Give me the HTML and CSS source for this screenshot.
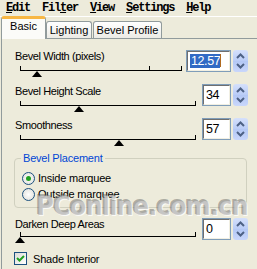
FILE: index.html
```html
<!DOCTYPE html>
<html>
<head>
    <meta name="viewport" content="width=device-width, initial-scale=1.0">
    <title>Bevel Boss</title>
    <link rel="stylesheet" href="styles.css">
</head>
<body>
    <div class="menubar">
        <span><u>E</u>dit</span>
        <span>Fil<u>t</u>er</span>
        <span><u>V</u>iew</span>
        <span><u>S</u>ettings</span>
        <span><u>H</u>elp</span>
    </div>

    <div class="tabs">
        <div class="tab on">Basic</div>
        <div class="tab">Lighting</div>
        <div class="tab">Bevel Profile</div>
    </div>

    <div class="panel">
        <div class="row first">
            <div class="slide">
                <div class="lbl">Bevel Width (pixels)</div>
                <div class="track"><i class="tick" style="left: 80%"></i><b class="thumb" style="left: 10.6%"></b></div>
            </div>
            <div class="num wide"><span class="val"><span class="sel">12.57</span><span class="caret"></span></span></div>
            <div class="spin"><svg width="15" height="22" viewBox="0 0 15 22"><path d="M4 8 L7.5 4.5 L11 8" /><path d="M4 14 L7.5 17.5 L11 14" /></svg></div>
        </div>

        <div class="row">
            <div class="slide">
                <div class="lbl">Bevel Height Scale</div>
                <div class="track"><b class="thumb" style="left: 34%"></b></div>
            </div>
            <div class="num"><span class="val">34</span></div>
            <div class="spin"><svg width="15" height="22" viewBox="0 0 15 22"><path d="M4 8 L7.5 4.5 L11 8" /><path d="M4 14 L7.5 17.5 L11 14" /></svg></div>
        </div>

        <div class="row">
            <div class="slide">
                <div class="lbl">Smoothness</div>
                <div class="track"><b class="thumb" style="left: 57%"></b></div>
            </div>
            <div class="num"><span class="val">57</span></div>
            <div class="spin"><svg width="15" height="22" viewBox="0 0 15 22"><path d="M4 8 L7.5 4.5 L11 8" /><path d="M4 14 L7.5 17.5 L11 14" /></svg></div>
        </div>

        <fieldset class="group">
            <legend>Bevel Placement</legend>
            <label class="radio on"><i></i>Inside marquee</label>
            <label class="radio"><i></i>Outside marquee</label>
        </fieldset>

        <div class="row last">
            <div class="slide">
                <div class="lbl">Darken Deep Areas</div>
                <div class="track"><b class="thumb" style="left: 0%"></b></div>
            </div>
            <div class="num"><span class="val">0</span></div>
            <div class="spin"><svg width="15" height="22" viewBox="0 0 15 22"><path d="M4 8 L7.5 4.5 L11 8" /><path d="M4 14 L7.5 17.5 L11 14" /></svg></div>
        </div>

        <label class="check"><i><svg width="11" height="11" viewBox="0 0 11 11"><path d="M2 5 L4.5 7.5 L9 3" /></svg></i>Shade Interior</label>
    </div>

    <!-- site watermark burnt into the capture -->
    <div class="mark">PConline.com.cn</div>
</body>
</html>
```

FILE: styles.css
```css
body {
    margin: 0;
    width: 257px;
    height: 269px;
    overflow: hidden;
    position: relative;
    background-color: #edebdb;
    font-family: "Liberation Sans", Arial, sans-serif;
    font-size: 11px;
    color: #000000;
}

/* menu */
.menubar {
    height: 16px;
    border-bottom: 1px solid #ffffff;
    display: flex;
    gap: 12px;
    padding-left: 6px;
    font-family: "Liberation Mono", monospace;
    font-weight: bold;
    font-size: 12px;
    letter-spacing: -1.2px;
    line-height: 16px;
}

/* tabs */
.tabs {
    height: 21px;
    display: flex;
    align-items: flex-end;
    padding-left: 1px;
    position: relative;
    z-index: 1;
}
.tab {
    height: 16px;
    border: 1px solid #919b9c;
    border-bottom: none;
    border-radius: 3px 3px 0 0;
    background: linear-gradient(#ffffff, #ecebe5);
    line-height: 17px;
    text-align: center;
    margin-right: 1px;
}
.tab:nth-child(2) { width: 44px; }
.tab:nth-child(3) { width: 67px; }
.tab.on {
    width: 43px;
    height: 19px;
    margin-bottom: -1px;
    margin-right: 0;
    border-top: 3px solid #f7b745;
    background: #fbfbf8;
    line-height: 14px;
    padding-bottom: 1px;
}

.panel {
    margin-left: 1px;
    border-top: 1px solid #919b9c;
    border-left: 1px solid #919b9c;
    padding: 11px 9px 0 0;
    height: 219px;
}

/* slider rows */
.row {
    display: flex;
    align-items: flex-start;
    height: 34px;
}
.slide {
    flex: 1;
    padding-left: 13px;
}
.lbl {
    height: 13px;
    line-height: 13px;
    letter-spacing: -0.4px;
    margin-top: 1px;
}
.first .lbl { margin-top: 0; }
.track {
    position: relative;
    margin: 3px 6px 0 5px;
    height: 4px;
    border-left: 1px solid #000000;
    border-right: 1px solid #000000;
    border-bottom: 1px solid #000000;
}
.first .track { margin-right: 4px; }
.tick {
    position: absolute;
    top: 0;
    width: 1px;
    height: 4px;
    background: #000000;
}
.thumb {
    position: absolute;
    top: 5px;
    margin-left: -6px;
    width: 0;
    height: 0;
    border-left: 5px solid transparent;
    border-right: 5px solid transparent;
    border-bottom: 6px solid #000000;
}

.num {
    width: 27px;
    height: 20px;
    border: 1px solid #7f9db9;
    background: #ffffff;
    padding: 0;
    box-sizing: content-box;
}
.num.wide { width: 43px; }
.val {
    display: block;
    height: 18px;
    border-top: 1px solid #6f6f6f;
    border-left: 1px solid #6f6f6f;
    border-right: 1px solid #f1efe2;
    border-bottom: 1px solid #f1efe2;
    font-size: 12.5px;
    line-height: 18px;
    padding-left: 2px;
    letter-spacing: -0.4px;
}
.sel {
    background: #316ac5;
    color: #ffffff;
    padding: 0 0 0 1px;
}
.caret {
    display: inline-block;
    width: 1px;
    height: 13px;
    vertical-align: -2px;
    background: #b06a20;
}
.spin {
    margin-left: 2px;
    width: 15px;
    height: 22px;
    border-radius: 3px;
    background: linear-gradient(#d5e0fb, #b9ccf7 50%, #b3c7f5 50%, #c9d7fb);
}
.spin svg {
    display: block;
    fill: none;
    stroke: #4d6185;
    stroke-width: 2;
}

/* group box */
.group {
    margin: 0 1px 0 12px;
    padding: 0 6px 5px 6px;
    border: 1px solid #d0d0bf;
    border-radius: 4px;
}
.group legend {
    padding: 0 2px;
    color: #0046d5;
    line-height: 13px;
    letter-spacing: -0.2px;
}
.radio {
    display: flex;
    align-items: center;
    height: 16px;
    gap: 3px;
    margin-left: 1px;
    letter-spacing: -0.2px;
}
.radio.on { margin-top: 5px; }
.radio i {
    width: 11px;
    height: 11px;
    border: 1px solid #1c5180;
    border-radius: 50%;
    background: radial-gradient(#ffffff, #dcdcd6);
    position: relative;
}
.radio.on i::after {
    content: "";
    position: absolute;
    left: 3px;
    top: 3px;
    width: 5px;
    height: 5px;
    border-radius: 50%;
    background: #21a121;
}
.last {
    margin-top: 10px;
}
.last .lbl { margin-top: 0; }
.last .track { margin-top: 1px; }

/* checkbox */
.check {
    display: flex;
    align-items: center;
    height: 13px;
    gap: 6px;
    margin: 0 0 0 12px;
    letter-spacing: -0.2px;
}
.check i {
    width: 11px;
    height: 11px;
    border: 1px solid #1c5180;
    background: linear-gradient(135deg, #dcdcd7, #ffffff);
}
.check svg {
    display: block;
    fill: none;
    stroke: #21a121;
    stroke-width: 2;
}

/* watermark */
.mark {
    position: absolute;
    left: 36px;
    top: 192px;
    font-family: "DejaVu Sans Condensed", "DejaVu Sans", sans-serif;
    font-weight: bold;
    font-stretch: condensed;
    font-size: 27px;
    line-height: 27px;
    letter-spacing: -1px;
    color: rgba(165, 165, 165, 0.55);
    text-shadow: 1px 1px 0 rgba(255, 255, 255, 0.75), -1px -1px 0 rgba(70, 70, 70, 0.4);
    pointer-events: none;
}
```
